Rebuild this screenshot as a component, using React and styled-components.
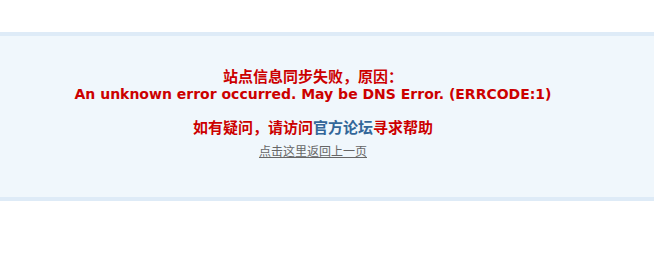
import React from "react"
import styled, { createGlobalStyle } from "styled-components"

const Global = createGlobalStyle`
  body {
    margin: 0;
    background: #fff;
    font-family: "DejaVu Sans", "Noto Sans CJK SC", sans-serif;
  }
`

const Page = styled.div`
  padding-top: 32px;
`

const MessageBox = styled.div`
  background: #f0f7fc;
  border-top: 4px solid #deebf7;
  border-bottom: 4px solid #deebf7;
  box-sizing: border-box;
  height: 169px;
  display: flex;
  flex-direction: column;
  align-items: center;
  padding-right: 28px;
  padding-top: 31px;
`

const Alert = styled.p`
  margin: 0;
  color: #cc0000;
  font-weight: bold;
  font-size: 14px;
  line-height: 17px;
  text-align: center;
`

const Cjk = styled.span`
  font-family: "Noto Sans CJK SC", sans-serif;
  font-size: ${p => p.$size || 14}px;
`

const Help = styled.p`
  margin: 15px 0 0;
  color: #cc0000;
  font-weight: bold;
  line-height: 17px;
  text-align: center;
`

const ForumLink = styled.a`
  color: #336699;
  text-decoration: none;
`

const BackLink = styled.a`
  margin-top: 7px;
  font-family: "Noto Sans CJK SC", sans-serif;
  font-size: 12px;
  line-height: 16px;
  color: #666;
  text-decoration: underline;
`

export default function App() {
  return (
    <>
      <Global />
      <Page>
        <MessageBox>
          <Alert>
            <Cjk $size={15}>站点信息同步失败，原因：</Cjk>
            <br />
            An unknown error occurred. May be DNS Error. (ERRCODE:1)
          </Alert>
          <Help>
            <Cjk $size={15}>
              如有疑问，请访问<ForumLink href="#">官方论坛</ForumLink>寻求帮助
            </Cjk>
          </Help>
          <BackLink href="#">点击这里返回上一页</BackLink>
        </MessageBox>
      </Page>
    </>
  )
}
